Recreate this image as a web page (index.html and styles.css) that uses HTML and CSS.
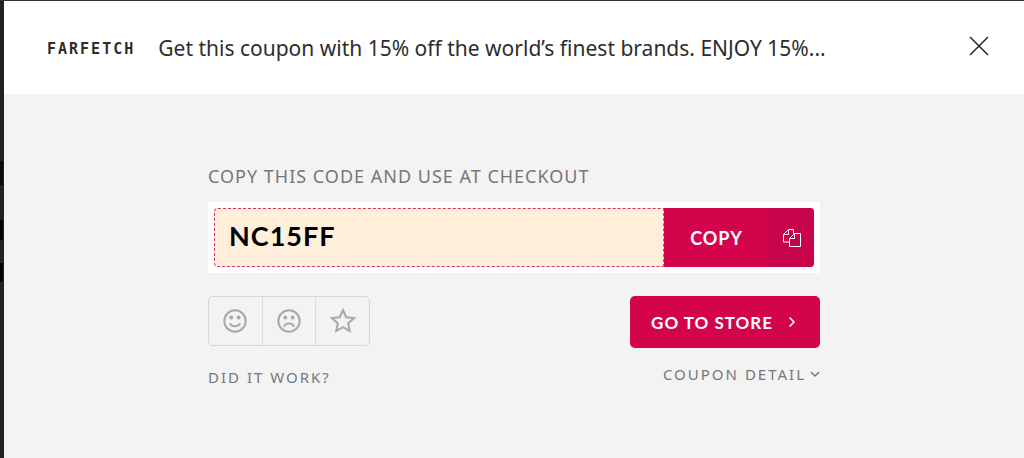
FILE: index.html
```html
<!DOCTYPE html>
<html lang="en">
<head>
  <meta charset="UTF-8" />
  <meta name="viewport" content="width=device-width, initial-scale=1" />
  <title>Farfetch coupon</title>
  <link rel="stylesheet" href="styles.css">
</head>
<body>
  <div class="modal">
    <header class="modal-header">
      <span class="logo">FARFETCH</span>
      <h1>Get this coupon with 15% off the world’s finest brands. ENJOY 15%...</h1>
      <button class="close" type="button" aria-label="Close">
        <svg width="20" height="20" viewBox="0 0 20 20"><path d="M1 1l18 18M19 1L1 19" /></svg>
      </button>
    </header>

    <main class="coupon">
      <label class="caption" for="code">COPY THIS CODE AND USE AT CHECKOUT</label>
      <div class="code-box">
        <input id="code" type="text" value="NC15FF" readonly>
        <button class="copy" id="copyBtn" type="button">
          <span class="copy-text">COPY</span>
          <span class="copy-icon">
            <svg width="20" height="20" viewBox="0 0 20 20">
              <path d="M7.500 14H1.500V6.500L6.500 1.500H11.500V5.500M6.500 1.500V6.500H1.500M12.500 5.500H18.500V18.500H7.500V10.500ZM12.500 5.500V10.500H7.500" />
            </svg>
          </span>
        </button>
      </div>

      <div class="actions">
        <div class="feedback">
          <div class="votes">
            <button type="button" aria-label="It worked">
              <svg width="24" height="24" viewBox="0 0 24 24">
                <circle cx="12" cy="12" r="10.700" />
                <circle class="eye" cx="8.300" cy="8.500" r="1.900" />
                <circle class="eye" cx="15.700" cy="8.500" r="1.900" />
                <path d="M7 14.200c1.400 4.200 8.600 4.200 10 0" />
              </svg>
            </button>
            <button type="button" aria-label="It did not work">
              <svg width="24" height="24" viewBox="0 0 24 24">
                <circle cx="12" cy="12" r="10.700" />
                <circle class="eye" cx="8.300" cy="8.500" r="1.900" />
                <circle class="eye" cx="15.700" cy="8.500" r="1.900" />
                <path d="M7 17.700c1.400-4.200 8.600-4.200 10 0" />
              </svg>
            </button>
            <button type="button" aria-label="Save coupon">
              <svg width="26" height="26" viewBox="0 0 26 26">
                <path d="M13 2l3.200 7.200 7.800.9-5.800 5.200 1.600 7.700-6.800-3.900-6.800 3.900 1.600-7.700L2 10.100l7.800-.9z" />
              </svg>
            </button>
          </div>
          <p class="caption small">DID IT WORK?</p>
        </div>

        <div class="store">
          <a class="go" href="#">GO TO STORE
            <svg width="8" height="12" viewBox="0 0 8 12"><path d="M1.500 1.500L6 6l-4.500 4.500" /></svg>
          </a>
          <a class="caption small detail" href="#">COUPON DETAIL
            <svg width="10" height="8" viewBox="0 0 10 8"><path d="M1 2l4 4 4-4" /></svg>
          </a>
        </div>
      </div>
    </main>
  </div>

  <script>
    document.getElementById("copyBtn").addEventListener("click", () => {
      const code = document.getElementById("code");
      code.select();
      document.execCommand("copy");
    });
  </script>
</body>
</html>
```
FILE: styles.css
```css
* { box-sizing: border-box; }
body { margin: 0; background: #242120; font-family: "Noto Sans", sans-serif; color: #2d2d2d; }
button { border: 0; padding: 0; cursor: pointer; }
svg { display: block; fill: none; stroke: currentColor; }

.modal { display: flex; flex-direction: column; min-height: 100vh; padding-left: 4px; border-top: 1px solid #333; background: linear-gradient(transparent 160px, #0c0a0a 160px 184px, transparent 184px 219px, #000 219px 239px, transparent 239px 262px, #000 262px 281px, transparent 281px) no-repeat 0 0 / 3px 100%; }

.modal-header { display: flex; align-items: center; height: 93px; padding: 0 35px 0 43px; background: #fff; }
.logo { padding-top: 3px; font: bold 15px "DejaVu Sans Mono", monospace; letter-spacing: 2px; }
.modal-header h1 { flex: 1; margin: 0 20px 0 23px; font-size: 21px; line-height: 28px; font-weight: 400; white-space: nowrap; overflow: hidden; text-overflow: ellipsis; }
.close { margin-bottom: 3px; background: none; color: #222; }
.close svg { stroke-width: 1.5; }

.coupon { flex: 1; width: 100%; padding: 70px calc(50% - 306px) 40px; background: #f3f3f3; }
.caption { display: block; margin: 0; font-size: 18px; line-height: 24px; letter-spacing: 1px; color: #777; }
.caption.small { font-size: 15px; letter-spacing: 2px; }

.code-box { display: flex; height: 71px; margin-top: 14px; padding: 6px; background: #fff; }
.code-box input { flex: 1; min-width: 0; padding: 0 14px 4px; border: 1px dashed #dd2f6c; border-right-color: #777; border-radius: 4px 0 0 4px; background: #ffefdb; font: bold 27px Lato, sans-serif; letter-spacing: 1px; color: #000; outline: 0; }
.copy { display: flex; width: 150px; border-radius: 0 4px 4px 0; overflow: hidden; background: #d4044c; color: #fff; font: bold 18px Lato, sans-serif; letter-spacing: 1px; }
.copy-text, .copy-icon { display: flex; align-items: center; justify-content: center; height: 100%; }
.copy-text { flex: 1; }
.copy-icon { width: 45px; background: #c70449; }

.actions { display: flex; justify-content: space-between; margin-top: 23px; }
.votes { display: flex; width: 162px; height: 50px; margin-bottom: 19px; border: 1px solid #d6d6d6; border-radius: 5px; }
.votes button { display: flex; align-items: center; justify-content: center; flex: 1; background: none; color: #a8a8a8; }
.votes button + button { border-left: 1px solid #dcdcdc; }
.votes svg { stroke-width: 2; }
.votes .eye { fill: currentColor; stroke: none; }

.store { display: flex; flex-direction: column; align-items: flex-end; }
.go { display: flex; align-items: center; gap: 15px; height: 52px; margin-bottom: 14px; padding: 0 24px 0 21px; border-radius: 5px; background: #d4044c; color: #fff; font: bold 17px Lato, sans-serif; letter-spacing: 1px; text-decoration: none; }
.go svg { stroke-width: 1.5; }
.detail { display: flex; align-items: center; gap: 4px; text-decoration: none; }
.detail svg { stroke-width: 1.5; }
```
